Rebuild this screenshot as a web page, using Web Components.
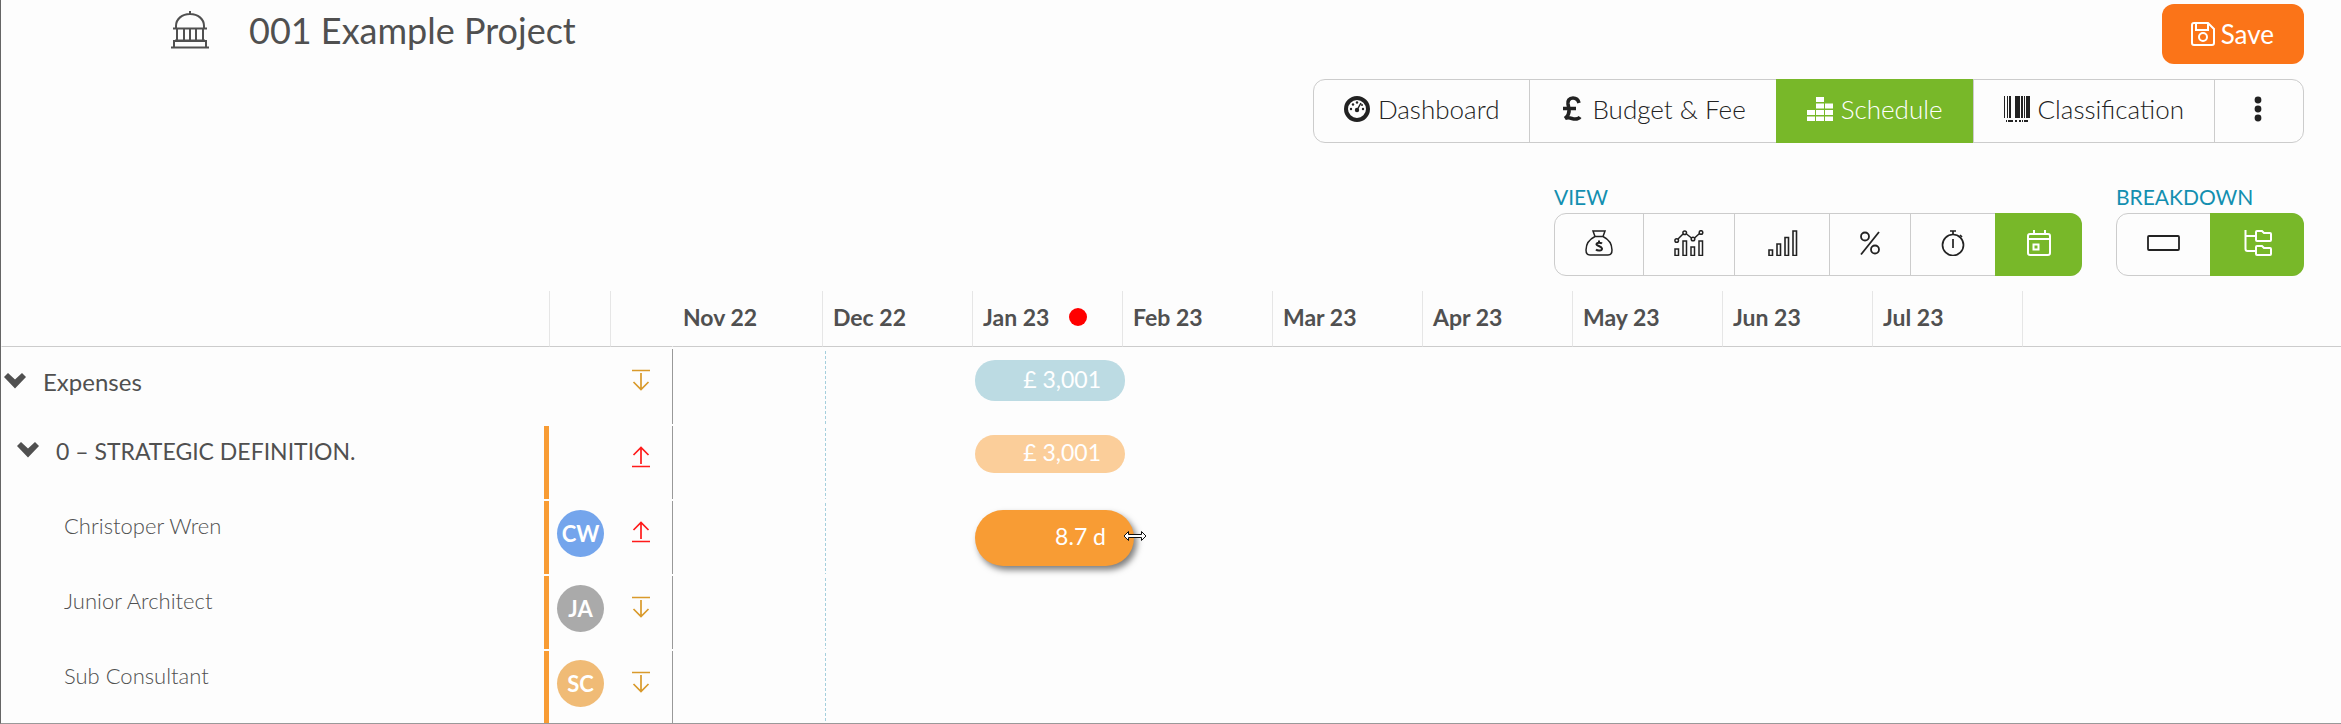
<!DOCTYPE html>
<html lang="en">
<head>
<meta charset="utf-8">
<title>001 Example Project</title>
<style>
  body {
    margin: 0;
    background: #fdfdfd;
    color: #505050;
    font-family: Lato, "Open Sans", sans-serif;
  }
</style>
</head>
<body>
<project-page>
  <project-title slot="title">001 Example Project</project-title>
  <tool-button slot="action" variant="primary" icon="save">Save</tool-button>
  <button-group slot="tabs" size="large">
    <tool-button icon="gauge">Dashboard</tool-button>
    <tool-button icon="pound">Budget &amp; Fee</tool-button>
    <tool-button icon="blocks" active>Schedule</tool-button>
    <tool-button icon="barcode">Classification</tool-button>
    <tool-button icon="dots" label="More"></tool-button>
  </button-group>
  <button-group slot="tools" heading="VIEW">
    <tool-button icon="money" label="Money"></tool-button>
    <tool-button icon="combo" label="Combined chart"></tool-button>
    <tool-button icon="bars" label="Bar chart"></tool-button>
    <tool-button icon="percent" label="Percentage"></tool-button>
    <tool-button icon="timer" label="Time"></tool-button>
    <tool-button icon="calendar" label="Calendar" active></tool-button>
  </button-group>
  <button-group slot="tools" heading="BREAKDOWN">
    <tool-button icon="flat" label="Flat"></tool-button>
    <tool-button icon="tree" label="Tree" active></tool-button>
  </button-group>
  <schedule-table></schedule-table>
</project-page>

<script>
// width, height, markup
const icons = {
  dome: [38, 38, `<g fill="none" stroke="currentColor" stroke-width="2">
    <path d="M19 0v4M5 17v-2C5 8 11 3 19 3s14 5 14 12v2M2 17.500h34M6 18v11M13 18v11M19 18v11M25 18v11M32 18v11M4 29.500h30M3 36v-6h32v6M0 36.500h38"/></g>`],
  save: [24, 24, `<g fill="none" stroke="currentColor" stroke-width="2">
    <path d="M3 1h14l6 6v14a2 2 0 0 1-2 2H3a2 2 0 0 1-2-2V3a2 2 0 0 1 2-2zM5 1v7h12V1"/><circle cx="12" cy="15" r="4"/></g>`],
  gauge: [26, 26, `<circle cx="13" cy="13" r="11" fill="none" stroke="currentColor" stroke-width="4"/>
    <circle cx="13" cy="14" r="2.200"/><path d="M13 14l4-7" stroke="currentColor" stroke-width="1.500"/>
    <circle cx="7" cy="13" r="1.200"/><circle cx="9" cy="8.500" r="1.200"/><circle cx="13" cy="6.500" r="1.200"/><circle cx="19" cy="13" r="1.200"/><circle cx="18" cy="9" r="1"/>`],
  pound: [24, 26, `<path fill="none" stroke="currentColor" stroke-width="3.600" d="M19 7c-1-4-4-5-6-5-4 0-5.500 3-5 6l1 5c.5 4-1 7-4 9.500 4-2 7 .5 10 .5 2 0 4-.5 5-2M3 12.500h13"/>`],
  blocks: [26, 24, `<path d="M9 0h8v5H9zM0 13h8v5H0zM9 6.500h8v5H9zM9 13h8v5H9zM18 6.500h8v5h-8zM18 13h8v5h-8zM0 19.500h8v5H0zM9 19.500h8v5H9zM18 19.500h8v5h-8z"/>`],
  barcode: [26, 26, `<path d="M0 0h1v22H0zM3 0h1v22H3zM5 0h2v22H5zM11 0h5v22h-5zM17 0h2v22h-2zM20 0h1v22h-1zM22 0h4v22h-4zM2 24h1v2H2zM4 24h5v2H4zM11 24h2v2h-2zM15 24h2v2h-2zM18 24h1v2h-1zM20 24h4v2h-4z"/>`],
  dots: [28, 26, `<circle cx="13" cy="4" r="3.400"/><circle cx="13" cy="13" r="3.400"/><circle cx="13" cy="22" r="3.400"/>`],
  money: [28, 26, `<g fill="none" stroke="currentColor" stroke-width="1.500">
    <path d="M8 1h12l-2 5.500h-8zM10 6.500C5 9 1 14 1 20c0 4 1.500 5 4 5h18c2.500 0 4-1 4-5 0-6-4-11-9-13.500"/>
    <path stroke-width="2" d="M17 13.500c-1-1-5-1.500-5.500.5s5 2 5.500 4.500-4.500 2.500-6 1M14 10.500v2M14 19.500v2"/></g>`],
  combo: [30, 26, `<g fill="none" stroke="currentColor" stroke-width="1.500">
    <path d="M1 19h3.500v6.500H1zM9 11h3.500v14.500H9zM17 17h3.500v8.500H17zM25 11h3.500v14.500H25zM4 9l5-5M12.500 4l5 4M20.500 8l5-4.500"/>
    <circle cx="2.700" cy="10.500" r="1.800"/><circle cx="10.700" cy="2.700" r="1.800"/><circle cx="19" cy="9" r="1.800"/><circle cx="27" cy="2.500" r="1.800"/></g>`],
  bars: [34, 26, `<path fill="none" stroke="currentColor" stroke-width="1.600" d="M4 20h3.500v5.500H4zM12 14h3.500v11.500H12zM20 7.500h3.500v18H20zM28 1h3.500v24.500H28z"/>`],
  percent: [20, 26, `<g fill="none" stroke="currentColor" stroke-width="1.800"><circle cx="5" cy="6.500" r="4"/><circle cx="15" cy="19.500" r="4"/><path d="M19 2L1 24.500"/></g>`],
  timer: [24, 26, `<g fill="none" stroke="currentColor" stroke-width="1.700"><circle cx="12" cy="15" r="10.500"/><path d="M9 1h6M12 1v4M19 5l2 2M12 9v9"/></g>`],
  calendar: [26, 26, `<g fill="none" stroke="currentColor" stroke-width="2" transform="translate(1)"><path d="M3 4h18a2 2 0 0 1 2 2v17a2 2 0 0 1-2 2H3a2 2 0 0 1-2-2V6a2 2 0 0 1 2-2zM1 9h22M7 0v4M18 0v4M6.500 14.500h5v5h-5z"/></g>`],
  flat: [33, 16, `<rect x="1" y="1" width="31" height="14" rx="1" fill="none" stroke="currentColor" stroke-width="1.800"/>`],
  tree: [33, 26, `<path fill="none" stroke="currentColor" stroke-width="2" transform="translate(3)" d="M1.500 0v19a2 2 0 0 0 2 2H12M2 6h10M13 1h5l2 2h6a1 1 0 0 1 1 1v6a1 1 0 0 1-1 1H13a1 1 0 0 1-1-1V2a1 1 0 0 1 1-1zM13 16h5l2 2h6a1 1 0 0 1 1 1v5a1 1 0 0 1-1 1H13a1 1 0 0 1-1-1v-7a1 1 0 0 1 1-1z"/>`],
  chevron: [22, 16, `<path d="M0 4l4-4 7 6.500L18 0l4 4-11 11.500z"/>`],
  down: [18, 22, `<path fill="none" stroke="currentColor" stroke-width="1.700" d="M0 1.500h18M9 4v16M1.500 13L9 20.500l7.500-7.500"/>`],
  up: [18, 22, `<path fill="none" stroke="currentColor" stroke-width="1.700" d="M0 20.500h18M9 18V2M1.500 9L9 1.500 16.500 9"/>`],
  resize: [24, 12, `<path fill="#fff" stroke="#111" d="M1 6l4.500-4.500v3h13v-3L23 6l-4.500 4.500v-3h-13v3z"/>`],
};

class UiIcon extends HTMLElement {
  connectedCallback() {
    const [w, h, body] = icons[this.getAttribute("name")];
    const root = this.attachShadow({ mode: "open" });
    root.innerHTML = `
      <style>
        :host { display: inline-flex; flex: none; }
        svg { display: block; fill: currentColor; }
      </style>
      <svg width="${w}" height="${h}" viewBox="0 0 ${w} ${h}" aria-hidden="true">${body}</svg>`;
  }
}
customElements.define("ui-icon", UiIcon);

class ToolButton extends HTMLElement {
  connectedCallback() {
    const label = this.getAttribute("label");
    const root = this.attachShadow({ mode: "open" });
    root.innerHTML = `
      <style>
        :host { display: flex; color: #222; }
        :host([active]) { background: #78b829; color: #fff; }
        button {
          display: flex;
          align-items: center;
          gap: 8px;
          width: 100%;
          padding: 0 30px 4px;
          border: 0;
          background: none;
          color: inherit;
          font: 300 26px/32px Lato, sans-serif;
          cursor: pointer;
        }
        :host([variant="primary"]) button {
          height: 60px;
          gap: 6px;
          padding: 0 30px 0 29px;
          border-radius: 12px;
          background: #fb7418;
          color: #fff;
          font-weight: 400;
        }
      </style>
      <button type="button"${label ? ` aria-label="${label}"` : ""}>
        <ui-icon name="${this.getAttribute("icon")}"></ui-icon>
        ${label ? "" : "<slot></slot>"}
      </button>`;
  }
}
customElements.define("tool-button", ToolButton);

class ButtonGroup extends HTMLElement {
  connectedCallback() {
    const heading = this.getAttribute("heading");
    const root = this.attachShadow({ mode: "open" });
    root.innerHTML = `
      <style>
        :host { display: block; }
        .heading { padding-bottom: 2px; color: #138fb0; font-size: 21px; line-height: 28px; }
        .group {
          display: flex;
          box-sizing: border-box;
          height: 63px;
          border: 1px solid #ccc;
          border-radius: 12px;
        }
        :host([size="large"]) .group { height: 64px; }
        ::slotted(:not(:first-child)) { border-left: 1px solid #ccc; }
        /* the active button paints over the frame of its group */
        ::slotted([active]) { margin: -1px 0; padding: 1px 0; border-color: #78b829; }
        ::slotted([active]:last-child) { margin-right: -1px; border-radius: 0 12px 12px 0; }
      </style>
      ${heading ? `<div class="heading" id="heading">${heading}</div>` : ""}
      <div class="group" role="group"${heading ? ' aria-labelledby="heading"' : ""}><slot></slot></div>`;
  }
}
customElements.define("button-group", ButtonGroup);

class ProjectTitle extends HTMLElement {
  connectedCallback() {
    const root = this.attachShadow({ mode: "open" });
    root.innerHTML = `
      <style>
        :host { display: flex; align-items: center; gap: 40px; }
        h1 { margin: 0; font-size: 36px; line-height: 44px; font-weight: 400; }
      </style>
      <ui-icon name="dome"></ui-icon>
      <h1><slot></slot></h1>`;
  }
}
customElements.define("project-title", ProjectTitle);

class UserAvatar extends HTMLElement {
  connectedCallback() {
    const root = this.attachShadow({ mode: "open" });
    root.innerHTML = `
      <style>
        :host {
          display: flex;
          align-items: center;
          justify-content: center;
          width: 47px;
          height: 47px;
          border-radius: 50%;
          background: var(--avatar-color, #aaa);
          color: #fff;
          font-size: 22px;
          font-weight: 700;
        }
      </style>
      <slot></slot>`;
  }
}
customElements.define("user-avatar", UserAvatar);

class TimeBar extends HTMLElement {
  connectedCallback() {
    const root = this.attachShadow({ mode: "open" });
    root.innerHTML = `
      <style>
        :host {
          display: flex;
          align-items: center;
          justify-content: flex-end;
          box-sizing: border-box;
          position: relative;
          width: 150px;
          height: 41px;
          padding: 0 24px 4px 0;
          border-radius: 20px;
          background: #bcdbe3;
          color: #fff;
          font-size: 23px;
          line-height: 28px;
        }
        :host([kind="stage"]) { height: 38px; background: #fbce9a; }
        :host([kind="task"]) {
          width: 159px;
          height: 56px;
          padding-right: 28px;
          border-radius: 28px;
          background: #f89c34;
          box-shadow: 3px 4px 6px rgba(0, 0, 0, .5);
        }
        /* resize handle sits over the end of the bar */
        ui-icon { display: none; position: absolute; right: -13px; top: 20px; }
        :host([kind="task"]) ui-icon { display: block; }
      </style>
      <slot></slot><ui-icon name="resize"></ui-icon>`;
  }
}
customElements.define("time-bar", TimeBar);

const months = ["Nov 22", "Dec 22", "Jan 23", "Feb 23", "Mar 23", "Apr 23", "May 23", "Jun 23", "Jul 23"];
const rows = [
  { kind: "root", name: "Expenses", dir: "down", bar: "£ 3,001" },
  { kind: "stage", name: "0 – STRATEGIC DEFINITION.", dir: "up", bar: "£ 3,001" },
  { kind: "task", name: "Christoper Wren", dir: "up", bar: "8.7 d", user: "CW", color: "#74a5ec" },
  { kind: "task", name: "Junior Architect", dir: "down", user: "JA", color: "#aaa" },
  { kind: "task", name: "Sub Consultant", dir: "down", user: "SC", color: "#f0bb76" },
];

class ScheduleTable extends HTMLElement {
  connectedCallback() {
    const root = this.attachShadow({ mode: "open" });
    root.innerHTML = `
      <style>
        :host { display: block; }
        table {
          width: 100%;
          table-layout: fixed;
          border-collapse: separate;
          border-spacing: 0 2px;
        }
        .name-col { width: 548px; }
        .user-col { width: 61px; }
        .dir-col { width: 62px; }
        .month-col { width: 150px; }
        th, td { box-sizing: border-box; padding: 0; text-align: left; }
        th {
          height: 56px;
          padding-left: 10px;
          border-left: 1px solid #e6e6e6;
          border-bottom: 1px solid #ccc;
          font-size: 23px;
          font-weight: 700;
        }
        th:first-child, th:nth-child(4) { border-left-color: transparent; }
        .month { display: flex; align-items: center; gap: 20px; padding-bottom: 4px; }
        .today { width: 18px; height: 18px; border-radius: 50%; background: #f00; }
        td { height: 73px; vertical-align: top; }
        .root td { height: 75px; }
        .name {
          display: flex;
          gap: 17px;
          padding: 10px 0 0 63px;
          font-size: 22px;
          line-height: 30px;
          font-weight: 300;
        }
        .name button { display: flex; padding: 0; border: 0; background: none; color: inherit; margin-top: 6px; }
        .root .name { padding: 18px 0 0 3px; font-size: 24px; font-weight: 400; }
        .stage .name { padding-left: 16px; font-size: 23px; font-weight: 400; }
        tr:not(.root) td:first-child { border-right: 5px solid #f89c34; }
        .user { padding: 9px 0 0 8px; }
        .dir { display: flex; justify-content: center; padding-top: 20px; color: #d99a2b; }
        .dir.up { color: #ff1a1a; }
        td:nth-child(4) { border-left: 1px solid #999; }
        .dec {
          background: repeating-linear-gradient(#a5cfdd 0 3px, transparent 3px 5px) 3px 2px / 1px 100% no-repeat;
        }
        .jan { padding: 9px 0 0 3px; }
        .root .jan { padding-top: 11px; }
      </style>
      <table>
        <colgroup>
          <col class="name-col"><col class="user-col"><col class="dir-col">
          ${months.map(() => '<col class="month-col">').join("")}<col>
        </colgroup>
        <thead><tr>
          <th></th><th></th><th></th>
          ${months.map((m) => `<th scope="col"><div class="month">${m}${m === "Jan 23" ? '<span class="today"></span>' : ""}</div></th>`).join("")}
          <th></th>
        </tr></thead>
        <tbody>${rows.map((row) => this.renderRow(row)).join("")}</tbody>
      </table>`;
  }

  renderRow({ kind, name, dir, bar, user, color }) {
    const toggle = kind === "task" ? "" : `<button type="button" aria-label="Collapse ${name}"><ui-icon name="chevron"></ui-icon></button>`;
    return `
      <tr class="${kind}">
        <td><div class="name">${toggle}<span>${name}</span></div></td>
        <td>${user ? `<div class="user"><user-avatar style="--avatar-color: ${color}">${user}</user-avatar></div>` : ""}</td>
        <td><div class="dir ${dir}"><ui-icon name="${dir}"></ui-icon></div></td>
        <td></td>
        <td class="dec"></td>
        <td class="jan">${bar ? `<time-bar kind="${kind}">${bar}</time-bar>` : ""}</td>
        <td colspan="7"></td>
      </tr>`;
  }
}
customElements.define("schedule-table", ScheduleTable);

class ProjectPage extends HTMLElement {
  connectedCallback() {
    const root = this.attachShadow({ mode: "open" });
    root.innerHTML = `
      <style>
        :host {
          display: block;
          box-sizing: border-box;
          height: 100vh;
          overflow: hidden;
          border-left: 1px solid #666;
          border-bottom: 1px solid #999;
        }
        header { padding: 4px 37px 0 170px; }
        .top, .tabs, .tools { display: flex; }
        .top { justify-content: space-between; }
        .title { padding-top: 4px; }
        .tabs { justify-content: flex-end; padding-top: 15px; }
        .tools { justify-content: flex-end; gap: 34px; padding: 40px 0 13px; }
      </style>
      <header>
        <div class="top">
          <div class="title"><slot name="title"></slot></div>
          <slot name="action"></slot>
        </div>
        <nav class="tabs"><slot name="tabs"></slot></nav>
        <div class="tools"><slot name="tools"></slot></div>
      </header>
      <main><slot></slot></main>`;
  }
}
customElements.define("project-page", ProjectPage);
</script>
</body>
</html>
